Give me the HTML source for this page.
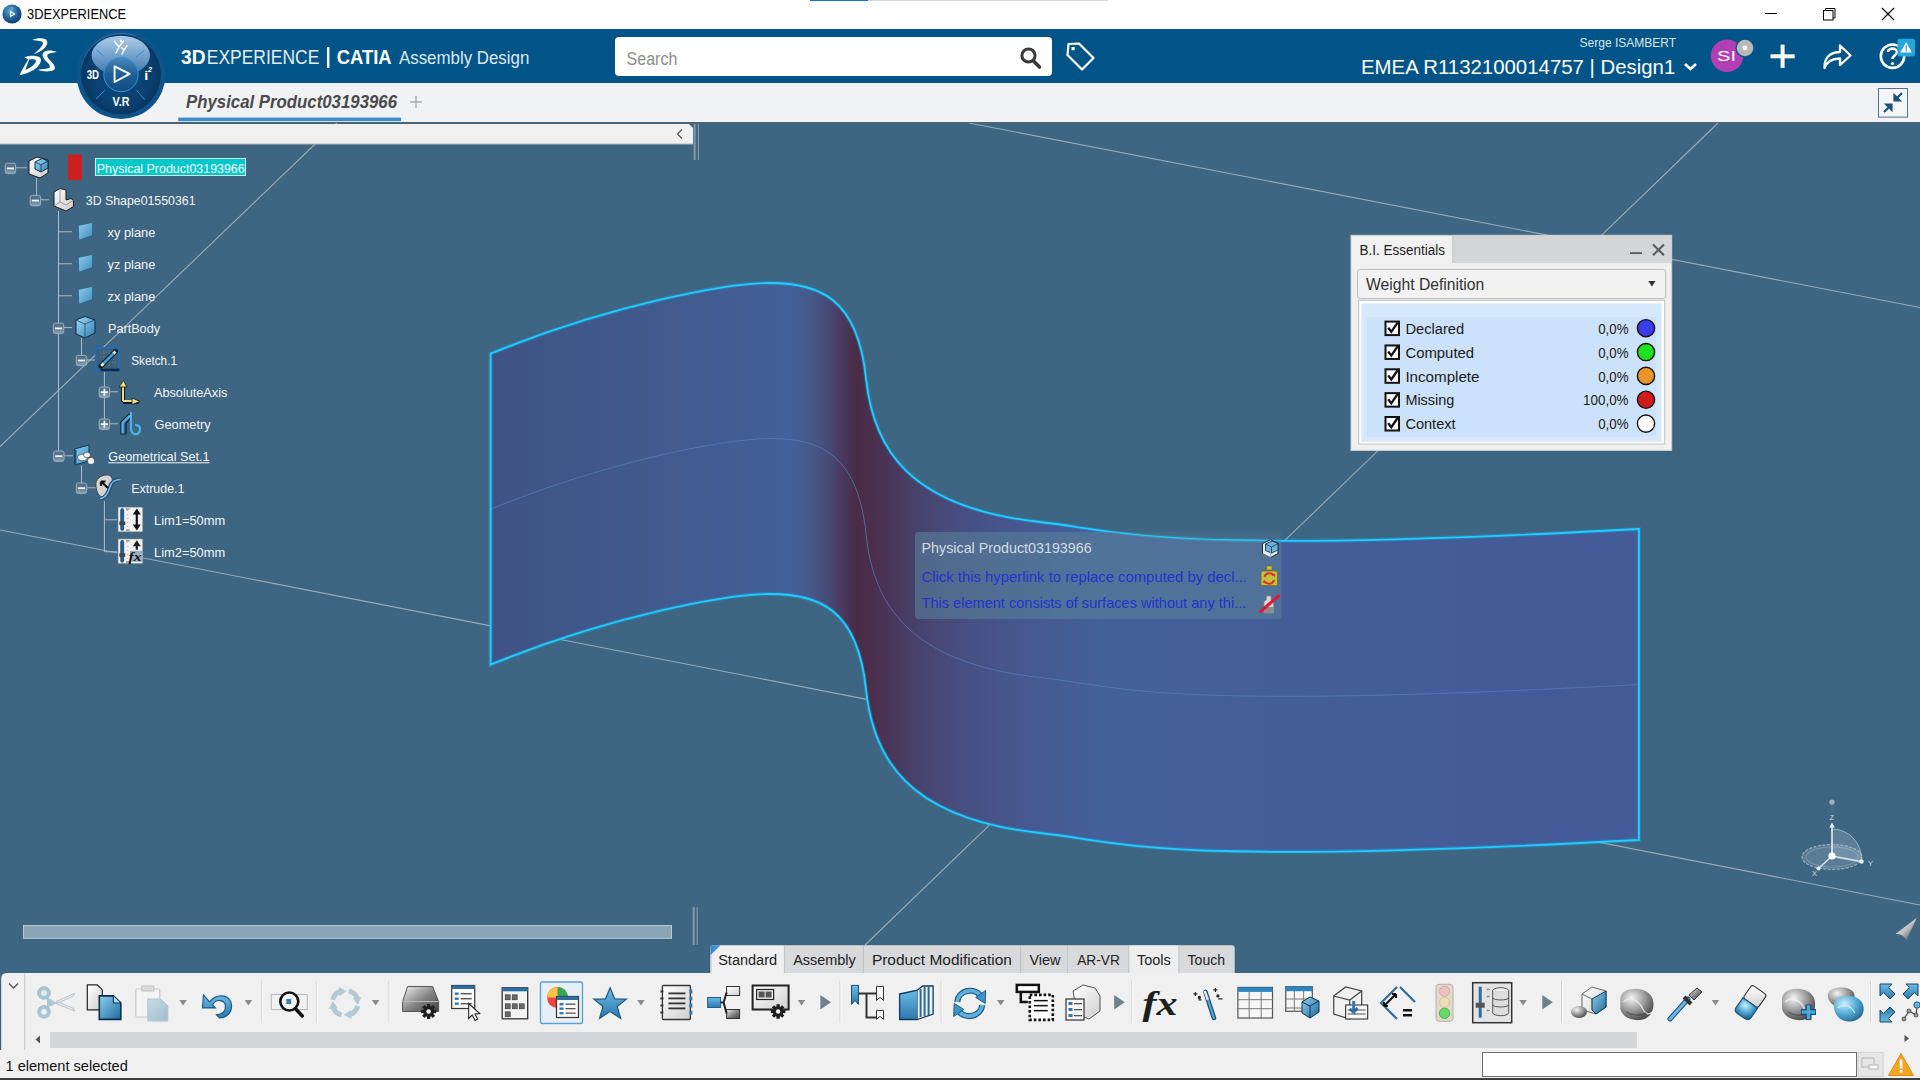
<!DOCTYPE html>
<html><head><meta charset="utf-8">
<style>
*{box-sizing:border-box;margin:0;padding:0}
html,body{width:1920px;height:1080px;overflow:hidden;background:#3e6581;font-family:"Liberation Sans",sans-serif}
.a{position:absolute}
#title{left:0;top:0;width:1920px;height:29px;background:#fff}
#hdr{left:0;top:29px;width:1920px;height:54px;background:#005487}
#tabbar{left:0;top:83px;width:1920px;height:40px;background:#f1f2f4;border-bottom:1px solid #56626c}
#toolbar{left:0;top:973px;width:1920px;height:77px;background:#f0f0f0;border-top-left-radius:6px}
#status{left:0;top:1050px;width:1920px;height:30px;background:#f0f0f0;border-bottom:2px solid #3c3c3c}
.tt{white-space:nowrap}
</style></head>
<body>
<svg class="a" style="left:0;top:0" width="1920" height="1080" viewBox="0 0 1920 1080">
<defs>
<linearGradient id="sg" gradientUnits="userSpaceOnUse" x1="490" y1="0" x2="1640" y2="0">
<stop offset="0" stop-color="#3f5383"/>
<stop offset="0.1313" stop-color="#405a8c"/>
<stop offset="0.2626" stop-color="#44609a"/>
<stop offset="0.2765" stop-color="#455a8c"/>
<stop offset="0.2939" stop-color="#474b78"/>
<stop offset="0.3061" stop-color="#4a3860"/>
<stop offset="0.3183" stop-color="#4a2c45"/>
<stop offset="0.3374" stop-color="#4a3050"/>
<stop offset="0.3652" stop-color="#483f68"/>
<stop offset="0.4043" stop-color="#474c7e"/>
<stop offset="0.4435" stop-color="#46558c"/>
<stop offset="0.5270" stop-color="#44609a"/>
<stop offset="1" stop-color="#435b98"/>
</linearGradient>
<clipPath id="shp"><path d="M490.6,353.7 C613.9,303.4 729.4,283.0 770.0,283.0 C817.6,283.0 857.5,296.6 866.0,378.3 C873.1,446.7 906.8,507.5 1040.0,522.0 C1124.2,531.1 1152.9,555.2 1639.0,529.0 L1639.0,840.0 C1152.9,866.2 1124.2,842.1 1040.0,833.0 C906.8,818.5 873.1,757.7 866.0,689.3 C857.5,607.6 817.6,594.0 770.0,594.0 C729.4,594.0 613.9,614.4 490.6,664.7 Z"/></clipPath>
<clipPath id="tipc"><rect x="915" y="532" width="366.3" height="87" rx="4"/></clipPath>
</defs>
<g stroke="#a7b8c4" stroke-width="1.1" fill="none" opacity="0.85">
<line x1="969" y1="123" x2="1920" y2="307.5"/>
<line x1="1718" y1="123" x2="865" y2="945"/>
<line x1="337" y1="123" x2="0" y2="446.6"/>
<line x1="0" y1="530" x2="1920" y2="905"/>
</g>
<g>
<ellipse cx="1832" cy="857" rx="30" ry="12.5" fill="rgba(190,210,225,0.22)" stroke="rgba(215,228,238,0.55)" stroke-width="1.2" stroke-dasharray="3 1.5"/>
<ellipse cx="1832" cy="857" rx="26" ry="10" fill="none" stroke="rgba(215,228,238,0.25)" stroke-width="1"/>
<path d="M1832,857 L1832,829 A29,29 0 0 1 1861,862 Z" fill="rgba(200,218,230,0.22)" stroke="rgba(215,228,238,0.5)" stroke-width="1"/>
<path d="M1832,856 L1832,826" stroke="#dfe8ef" stroke-width="1.6"/>
<path d="M1829.3,827.5 L1832,822.5 L1834.7,827.5 Z" fill="#eef3f7"/>
<path d="M1832,856 L1818.5,868.5 M1832,856 L1861.5,861.5" stroke="#d4dfe7" stroke-width="1.6"/>
<circle cx="1818.5" cy="868.5" r="2" fill="#e6edf2"/><circle cx="1861.5" cy="861.5" r="2.2" fill="#e6edf2"/>
<circle cx="1832" cy="856" r="3.6" fill="#ffffff"/>
<circle cx="1832" cy="802" r="2.6" fill="#9fb2c0"/>
<path d="M1832,805 L1832,812" stroke="rgba(160,180,195,0.5)" stroke-width="1" stroke-dasharray="1 1"/>
<g font-family="Liberation Sans" font-size="7.5" fill="#cfdbe4"><text x="1829.5" y="820">Z</text><text x="1812" y="876">X</text><text x="1868" y="866">Y</text></g>
</g>
<defs><linearGradient id="cone" x1="0" y1="0" x2="1" y2="1"><stop offset="0" stop-color="#ffffff"/><stop offset="0.55" stop-color="#b8b8b8"/><stop offset="1" stop-color="#2a2a2a"/></linearGradient></defs>
<path d="M1917,917.5 L1895.5,934 C1900,934 1904,935.5 1906.5,940 Z" fill="url(#cone)"/>
<path d="M490.6,353.7 C613.9,303.4 729.4,283.0 770.0,283.0 C817.6,283.0 857.5,296.6 866.0,378.3 C873.1,446.7 906.8,507.5 1040.0,522.0 C1124.2,531.1 1152.9,555.2 1639.0,529.0 L1639.0,840.0 C1152.9,866.2 1124.2,842.1 1040.0,833.0 C906.8,818.5 873.1,757.7 866.0,689.3 C857.5,607.6 817.6,594.0 770.0,594.0 C729.4,594.0 613.9,614.4 490.6,664.7 Z" fill="url(#sg)"/>
<path d="M490.6,509.2 C613.9,458.9 729.4,438.5 770.0,438.5 C817.6,438.5 857.5,452.1 866.0,533.8 C873.1,602.2 906.8,663.0 1040.0,677.5 C1124.2,686.6 1152.9,710.7 1639.0,684.5" fill="none" stroke="#5682c2" stroke-width="1" opacity="0.7"/>
<path d="M490.6,353.7 C613.9,303.4 729.4,283.0 770.0,283.0 C817.6,283.0 857.5,296.6 866.0,378.3 C873.1,446.7 906.8,507.5 1040.0,522.0 C1124.2,531.1 1152.9,555.2 1639.0,529.0 L1639.0,840.0 C1152.9,866.2 1124.2,842.1 1040.0,833.0 C906.8,818.5 873.1,757.7 866.0,689.3 C857.5,607.6 817.6,594.0 770.0,594.0 C729.4,594.0 613.9,614.4 490.6,664.7 Z" fill="none" stroke="#1aa8e8" stroke-width="4" opacity="0.35"/>
<path d="M490.6,353.7 C613.9,303.4 729.4,283.0 770.0,283.0 C817.6,283.0 857.5,296.6 866.0,378.3 C873.1,446.7 906.8,507.5 1040.0,522.0 C1124.2,531.1 1152.9,555.2 1639.0,529.0 L1639.0,840.0 C1152.9,866.2 1124.2,842.1 1040.0,833.0 C906.8,818.5 873.1,757.7 866.0,689.3 C857.5,607.6 817.6,594.0 770.0,594.0 C729.4,594.0 613.9,614.4 490.6,664.7 Z" fill="none" stroke="#22ccff" stroke-width="1.8"/>
<g clip-path="url(#tipc)"><rect x="900" y="520" width="400" height="110" fill="rgba(255,255,255,0.045)"/><rect x="900" y="520" width="400" height="110" fill="rgb(83,123,152)" opacity="0.6" clip-path="url(#shp)"/></g>
</svg>
<div id="title" class="a">
<svg class="a" style="left:2px;top:4px" width="20" height="20" viewBox="0 0 20 20">
<defs><radialGradient id="ig" cx="0.4" cy="0.35" r="0.7"><stop offset="0" stop-color="#5fa8d8"/><stop offset="0.6" stop-color="#1d5d95"/><stop offset="1" stop-color="#0b3766"/></radialGradient></defs>
<circle cx="10" cy="10" r="9.6" fill="url(#ig)"/>
<path d="M8.5,7.5 L12.5,10 L8.5,12.5 Z" fill="none" stroke="#fff" stroke-width="1.1"/>
<text x="10" y="5.5" font-size="4" fill="#cde" text-anchor="middle" font-family="Liberation Sans">Y</text>
</svg>
<div class="a tt" style="left:27px;top:5px;font-size:15px;line-height:18px;color:#000;transform:scaleX(0.855);transform-origin:0 0">3DEXPERIENCE</div>
<div class="a" style="left:810px;top:0;width:58px;height:1px;background:#1a73c7"></div>
<div class="a" style="left:868px;top:0;width:240px;height:1px;background:#d6d6d6"></div>
<div class="a" style="left:1765px;top:13px;width:12px;height:1px;background:#000"></div>
<svg class="a" style="left:1822px;top:7px" width="14" height="14" viewBox="0 0 14 14"><rect x="1.5" y="3.5" width="9.5" height="9.5" fill="#fff" stroke="#000" stroke-width="1"/><path d="M3.5,3.5 V1.5 H13 V11 H11" fill="none" stroke="#000" stroke-width="1"/></svg>
<svg class="a" style="left:1881px;top:7px" width="14" height="14" viewBox="0 0 14 14"><path d="M1,1 L13,13 M13,1 L1,13" stroke="#000" stroke-width="1.1"/></svg>
</div>
<div id="hdr" class="a">
<svg class="a" style="left:14px;top:5px" width="48" height="46" viewBox="0 0 48 46">
<g fill="#fff">
<path d="M18.3,6 C22,4.3 28,3.6 31.5,5.2 C34.5,6.8 33.8,11 30,14.5 C27,17.3 23,19 19.8,20.2 C23,17.3 26.3,14.2 28.3,11.2 C29.8,8.8 28.6,7.1 25.6,6.9 C23,6.7 20.5,6.6 18.3,6 Z"/>
<path fill-rule="evenodd" d="M10.2,23.6 C14,21.3 22,21.2 25.6,23.3 C28.3,25.3 27,30 22.3,34 C18.3,37.5 11,40.3 5.5,41 C8,36 11.5,30 14.3,25.6 C13,24.6 11.5,24 10.2,23.6 Z M15.2,25.4 C18.2,24.9 21.3,25 21.9,26.6 C22.3,28.6 19.6,31.6 16.1,33.6 C14.1,34.8 12.6,35.5 11.4,36 C12.6,32.5 13.9,29 15.2,25.4 Z"/>
<path d="M43,18.3 C39,15.8 32,15.8 29.4,18.4 C27.3,21 29.4,24.6 33,28.1 C35.4,30.5 36.8,32.5 35.4,33.7 C33,35 28,35 23.8,35.8 C28,37.6 36,38.1 39.6,36.3 C42.2,34.5 40.6,31 37.6,28 C34.6,25 32.5,22.6 33.5,20.8 C35,19 39,18.6 43,18.3 Z"/>
</g></svg>
<svg class="a" style="left:76px;top:0px;z-index:5" width="90" height="92" viewBox="0 29 90 92">
<defs>
<radialGradient id="cg1" cx="0.5" cy="0.5" r="0.5"><stop offset="0" stop-color="#0d4a80"/><stop offset="0.75" stop-color="#0a4070"/><stop offset="1" stop-color="#083762"/></radialGradient>
<linearGradient id="cg2" x1="0" y1="0" x2="0" y2="1"><stop offset="0" stop-color="#aecbe6"/><stop offset="0.45" stop-color="#7aa7d1"/><stop offset="1" stop-color="#3d74a8"/></linearGradient>
<linearGradient id="cg3" x1="0" y1="0" x2="0" y2="1"><stop offset="0" stop-color="#4a86bb"/><stop offset="0.5" stop-color="#1f5f97"/><stop offset="1" stop-color="#104b80"/></linearGradient>
</defs>
<g transform="translate(0,29)">
<circle cx="45" cy="45.5" r="44.5" fill="#0e548b"/><path d="M6,38 A40,40 0 0 1 60,7" fill="none" stroke="#2c73ab" stroke-width="1"/>
<circle cx="45" cy="45.5" r="40" fill="url(#cg1)"/>
<ellipse cx="44.8" cy="26.5" rx="29.2" ry="19.8" fill="url(#cg2)"/>
<circle cx="45" cy="45.5" r="17.2" fill="url(#cg3)" stroke="#3394e0" stroke-width="1"/>
<path d="M38.6,37.4 L53.6,44.9 L38.6,53 Z" fill="none" stroke="#fff" stroke-width="1.9" stroke-linejoin="round"/>
<g stroke="#3f8dd0" stroke-width="1">
<line x1="20.6" y1="20.8" x2="28.5" y2="27.9"/><line x1="59.9" y1="27.9" x2="68.4" y2="21.3"/>
<line x1="20.1" y1="70" x2="29" y2="61.2"/><line x1="60.4" y1="61.2" x2="68.8" y2="70.6"/>
</g>
<g fill="#fff" font-family="Liberation Sans" font-weight="bold">
<text x="10.7" y="50.2" font-size="12.5" textLength="12.3" lengthAdjust="spacingAndGlyphs">3D</text>
<text x="68.2" y="50.6" font-size="13" textLength="4" lengthAdjust="spacingAndGlyphs">i</text>
<text x="72" y="43" font-size="7" font-style="italic">2</text>
<text x="36.5" y="76.6" font-size="12.5" textLength="17" lengthAdjust="spacingAndGlyphs">V.R</text>
</g>
<g stroke="#fff" stroke-width="1.5" fill="none" stroke-linecap="round">
<path d="M38.5,12.5 L43,18 L40,24 M43,18 L47.5,12"/>
<path d="M45.5,18.5 L48,21 L46,25 M48,21 L51,16.5"/>
</g>
<circle cx="45" cy="11.8" r="1.2" fill="#fff"/>
</g>
</svg>


</div>

<div id="tabbar" class="a"></div>
<svg class="a" style="left:0px;top:0px" width="1920" height="123" viewBox="0 0 1920 123" font-family="Liberation Sans"><text x="181" y="64" font-size="19.5" fill="#fff" font-weight="bold" font-style="normal" text-anchor="start" textLength="24.5" lengthAdjust="spacingAndGlyphs" >3D</text><text x="206.8" y="64" font-size="19.5" fill="#e4edf4" font-weight="normal" font-style="normal" text-anchor="start" textLength="112.5" lengthAdjust="spacingAndGlyphs" >EXPERIENCE</text><rect x="327" y="47" width="2.4" height="21" fill="#fff"/><text x="336.7" y="64" font-size="19.5" fill="#fff" font-weight="bold" font-style="normal" text-anchor="start" textLength="55" lengthAdjust="spacingAndGlyphs" >CATIA</text><text x="399" y="64" font-size="18.5" fill="#dfe9f1" font-weight="normal" font-style="normal" text-anchor="start" textLength="130.3" lengthAdjust="spacingAndGlyphs" >Assembly Design</text><rect x="615" y="37" width="437" height="39" rx="4" fill="#fff"/><text x="626.6" y="64.5" font-size="17.5" fill="#8c8c8c" font-weight="normal" font-style="normal" text-anchor="start" textLength="50.7" lengthAdjust="spacingAndGlyphs" >Search</text><circle cx="1028.5" cy="55.5" r="6.6" fill="none" stroke="#3a3a3a" stroke-width="3"/><line x1="1033.5" y1="61" x2="1039.5" y2="67" stroke="#3a3a3a" stroke-width="3.6" stroke-linecap="round"/><path d="M1068.5,44 L1079,43.5 L1093.5,58 L1082,69.5 L1067.5,55 Z" fill="none" stroke="#fff" stroke-width="2.2" stroke-linejoin="round"/><rect x="1071.5" y="47" width="3.2" height="3.2" fill="#fff"/><text x="1579.6" y="46.7" font-size="12" fill="#d9e6f0" font-weight="normal" font-style="normal" text-anchor="start" textLength="96.4" lengthAdjust="spacingAndGlyphs" >Serge ISAMBERT</text><text x="1361" y="73.9" font-size="19.5" fill="#fff" font-weight="normal" font-style="normal" text-anchor="start" textLength="314.3" lengthAdjust="spacingAndGlyphs" >EMEA R1132100014757 | Design1</text><path d="M1685,64 L1690.5,69 L1696,64" fill="none" stroke="#fff" stroke-width="2.6"/><circle cx="1727" cy="55.7" r="16.2" fill="#b23fb4"/><text x="1717" y="61" font-size="15" fill="#fff" font-weight="normal" font-style="normal" text-anchor="start" textLength="19" lengthAdjust="spacingAndGlyphs" >SI</text><circle cx="1745" cy="48" r="9.6" fill="#005487"/><circle cx="1745" cy="48" r="8.3" fill="#b9b9b9"/><circle cx="1745" cy="47.8" r="2.4" fill="#fff"/><rect x="1770.5" y="54.3" width="24.2" height="4" fill="#fff"/><rect x="1780.6" y="44.6" width="4" height="23.3" fill="#fff"/><path d="M1824.5,68 C1824,58 1830,52 1840,52 L1840,45.5 L1850.5,55.5 L1840,65 L1840,58.5 C1832,58.5 1827,61 1824.5,68 Z" fill="none" stroke="#fff" stroke-width="2.3" stroke-linejoin="round"/><circle cx="1892.5" cy="56.2" r="11.7" fill="none" stroke="#fff" stroke-width="2.6"/><path d="M1888,52 C1888,47.5 1897,47.5 1897,52 C1897,55 1892.5,55.5 1892.5,59" fill="none" stroke="#fff" stroke-width="2.6"/><circle cx="1892.5" cy="63.5" r="1.6" fill="#fff"/><rect x="1897.5" y="38.8" width="17.5" height="17.6" rx="2.2" fill="#25a5d9"/><path d="M1906.2,42.3 L1912,52.5 L1900.4,52.5 Z" fill="#fff"/><rect x="1905.6" y="45.3" width="1.3" height="4.3" fill="#25a5d9"/><rect x="1905.6" y="50.2" width="1.3" height="1.3" fill="#25a5d9"/><text x="186" y="108.3" font-size="18" fill="#4a4a4a" font-weight="bold" font-style="italic" text-anchor="start" textLength="211" lengthAdjust="spacingAndGlyphs" >Physical Product03193966</text><rect x="410" y="101.3" width="12" height="1.4" fill="#a8a8a8"/><rect x="415.3" y="96" width="1.4" height="12" fill="#a8a8a8"/><rect x="178.3" y="117.6" width="222.7" height="3.6" fill="#3c8ccb"/><rect x="1878.5" y="88.5" width="29" height="28.6" fill="#f4f5f7" stroke="#4f7090" stroke-width="1"/><path d="M1884,112 L1891,105 M1886.5,104.5 L1891.5,104.5 L1891.5,109.5 Z M1902,93 L1895,100 M1894.5,95.5 L1894.5,100.5 L1899.5,100.5 Z" stroke="#1d4f7c" stroke-width="2.2" fill="#1d4f7c"/></svg>
<svg class="a" style="left:0px;top:0px" width="720" height="973" viewBox="0 0 720 973" font-family="Liberation Sans"><defs>
<linearGradient id="bxg" x1="0" y1="0" x2="0" y2="1"><stop offset="0" stop-color="#4a6e89"/><stop offset="0.5" stop-color="#557a94"/><stop offset="1" stop-color="#8da4b4"/></linearGradient>
<linearGradient id="plg" x1="0" y1="0" x2="1" y2="1"><stop offset="0" stop-color="#8fcbec"/><stop offset="1" stop-color="#3f8fc0"/></linearGradient>
<linearGradient id="cub" x1="0" y1="0" x2="1" y2="1"><stop offset="0" stop-color="#a8dcf5"/><stop offset="1" stop-color="#2f7fb5"/></linearGradient>
<linearGradient id="wht" x1="0" y1="0" x2="1" y2="1"><stop offset="0" stop-color="#ffffff"/><stop offset="1" stop-color="#c9c9c9"/></linearGradient>
</defs><rect x="15.7" y="167.3" width="11.3" height="1" fill="#aebdc9"/><rect x="36.1" y="178" width="1" height="17.400000000000006" fill="#aebdc9"/><rect x="40.7" y="199.3" width="8.299999999999997" height="1" fill="#aebdc9"/><rect x="58.0" y="211" width="1" height="112" fill="#aebdc9"/><rect x="58.0" y="334" width="1" height="117" fill="#aebdc9"/><rect x="58.5" y="231.3" width="13.5" height="1" fill="#aebdc9"/><rect x="58.5" y="263.3" width="13.5" height="1" fill="#aebdc9"/><rect x="58.5" y="295.3" width="13.5" height="1" fill="#aebdc9"/><rect x="63.9" y="327.1" width="8.100000000000001" height="1" fill="#aebdc9"/><rect x="81.0" y="338" width="1" height="17.399999999999977" fill="#aebdc9"/><rect x="86.9" y="359.5" width="8.099999999999994" height="1" fill="#aebdc9"/><rect x="103.9" y="371.5" width="1" height="15.399999999999977" fill="#aebdc9"/><rect x="103.9" y="397.5" width="1" height="21.5" fill="#aebdc9"/><rect x="109.7" y="391.3" width="8.299999999999997" height="1" fill="#aebdc9"/><rect x="109.7" y="423.3" width="8.299999999999997" height="1" fill="#aebdc9"/><rect x="64" y="455.3" width="9" height="1" fill="#aebdc9"/><rect x="81.0" y="465.5" width="1" height="17.5" fill="#aebdc9"/><rect x="86.9" y="487.3" width="9.099999999999994" height="1" fill="#aebdc9"/><rect x="103.9" y="501" width="1" height="51" fill="#aebdc9"/><rect x="104.4" y="519.3" width="12.599999999999994" height="1" fill="#aebdc9"/><rect x="104.4" y="551.3" width="12.599999999999994" height="1" fill="#aebdc9"/><rect x="5.2" y="163.20000000000002" width="10.4" height="10.4" rx="2" fill="url(#bxg)" stroke="#9fb0bd" stroke-width="1"/><rect x="6.800000000000001" y="167.5" width="7.2" height="1.8" fill="#f2f5f7"/><rect x="30.2" y="195.4" width="10.4" height="10.4" rx="2" fill="url(#bxg)" stroke="#9fb0bd" stroke-width="1"/><rect x="31.799999999999997" y="199.7" width="7.2" height="1.8" fill="#f2f5f7"/><rect x="53.3" y="323.2" width="10.4" height="10.4" rx="2" fill="url(#bxg)" stroke="#9fb0bd" stroke-width="1"/><rect x="54.9" y="327.5" width="7.2" height="1.8" fill="#f2f5f7"/><rect x="76.3" y="355.3" width="10.4" height="10.4" rx="2" fill="url(#bxg)" stroke="#9fb0bd" stroke-width="1"/><rect x="77.9" y="359.6" width="7.2" height="1.8" fill="#f2f5f7"/><rect x="99.2" y="387.0" width="10.4" height="10.4" rx="2" fill="url(#bxg)" stroke="#9fb0bd" stroke-width="1"/><rect x="100.80000000000001" y="391.3" width="7.2" height="1.8" fill="#f2f5f7"/><rect x="103.5" y="388.59999999999997" width="1.8" height="7.2" fill="#f2f5f7"/><rect x="99.2" y="419.0" width="10.4" height="10.4" rx="2" fill="url(#bxg)" stroke="#9fb0bd" stroke-width="1"/><rect x="100.80000000000001" y="423.3" width="7.2" height="1.8" fill="#f2f5f7"/><rect x="103.5" y="420.59999999999997" width="1.8" height="7.2" fill="#f2f5f7"/><rect x="53.599999999999994" y="451.0" width="10.4" height="10.4" rx="2" fill="url(#bxg)" stroke="#9fb0bd" stroke-width="1"/><rect x="55.199999999999996" y="455.3" width="7.2" height="1.8" fill="#f2f5f7"/><rect x="76.3" y="483.0" width="10.4" height="10.4" rx="2" fill="url(#bxg)" stroke="#9fb0bd" stroke-width="1"/><rect x="77.9" y="487.3" width="7.2" height="1.8" fill="#f2f5f7"/><path d="M29,161 L37,157 L48,160 L48,173 L40,178 L29,174 Z" fill="url(#wht)" stroke="#1b1b1b" stroke-width="1"/><path d="M35,162 L42,158.5 L48,161 L48,168 L41,172 L35,169 Z" fill="url(#cub)" stroke="#0d3550" stroke-width="1"/><path d="M35,162 L41,165 L48,161 M41,165 L41,172" fill="none" stroke="#0d3550" stroke-width="0.8"/><rect x="68" y="154.6" width="14" height="25.5" fill="#cd1f1e"/><path d="M54,192 L60,188.5 L66,190 L66,200 L71,198.5 L73.5,200.5 L73.5,206.5 L66,211 L54,206 Z" fill="url(#wht)" stroke="#1d1d1d" stroke-width="1"/><path d="M60,188.5 L60,202 L66,205 L73.5,200.5 M60,202 L54,206" fill="none" stroke="#888" stroke-width="0.8"/><path d="M78.2,225.5 L92.6,222.2 L92.6,235.6 L78.7,240.3 Z" fill="url(#plg)" stroke="#2a5f82" stroke-width="0.8"/><path d="M78.2,257.5 L92.6,254.2 L92.6,267.6 L78.7,272.3 Z" fill="url(#plg)" stroke="#2a5f82" stroke-width="0.8"/><path d="M78.2,289.5 L92.6,286.2 L92.6,299.6 L78.7,304.3 Z" fill="url(#plg)" stroke="#2a5f82" stroke-width="0.8"/><path d="M76,320 L85,316.5 L95,320 L95,333 L85,338 L76,334 Z" fill="url(#cub)" stroke="#0b2d45" stroke-width="1"/><path d="M76,320 L85,324 L95,320 M85,324 L85,338" fill="none" stroke="#1f5a80" stroke-width="0.9"/><rect x="95.8" y="347.8" width="23" height="23" fill="#3f5f78" stroke="#1f6ec0" stroke-width="1.8"/><g stroke="#6f8ea4" stroke-width="0.7" stroke-dasharray="1 2"><path d="M100,352 H117 M100,357 H117 M100,362 H117 M104,350 V369 M109,350 V369 M114,350 V369"/></g><rect x="100.5" y="368.6" width="19" height="2.6" fill="#0a2a4a"/><path d="M101,366 L115.5,351.5" stroke="#0d1a26" stroke-width="5.2" stroke-linecap="round"/><path d="M102.5,364.5 L114,353" stroke="#3aa0dc" stroke-width="2.8"/><path d="M101.2,365.8 L103.5,363.5" stroke="#fff" stroke-width="2.6"/><path d="M113.5,353.5 L115.5,351.5" stroke="#f4f4f4" stroke-width="2.8"/><path d="M123,402 L123,386 M123,402 L139,402" fill="none" stroke="#0c1a3a" stroke-width="4"/><path d="M123,401 L123,386 M123,401 L138,401" fill="none" stroke="#f3dc7a" stroke-width="2"/><path d="M119,387 L123.5,380.5 L127,387 Z M132,398 L140,401.5 L132,404.5 Z" fill="#f3dc7a" stroke="#0c1a3a" stroke-width="0.8"/><path d="M121,434 L121,422 L129,414 L132,417 L126,423 L126,434 Z" fill="none" stroke="#0c1a3a" stroke-width="1.2"/><path d="M122.5,433.5 L122.5,423 L130,415.5 M131,412 L131,428 C131,436 140,436 140,429 C140,425 136,425 135,425" fill="none" stroke="#4ab4ec" stroke-width="2.2"/><path d="M74.5,449 L89,445 L89,461 L74.5,465 Z" fill="url(#plg)" stroke="#0f3a5c" stroke-width="1"/><path d="M74.5,449 L74.5,465 L76.5,466 L76.5,450 Z" fill="#1a5588"/><ellipse cx="82.5" cy="457.5" rx="5" ry="3.2" fill="#f2f2f2" stroke="#333" stroke-width="0.6"/><ellipse cx="87" cy="455" rx="3.4" ry="2.8" fill="#f7f7f7" stroke="#333" stroke-width="0.6"/><circle cx="91" cy="461" r="3.6" fill="#f2f2f2" stroke="#333" stroke-width="0.6"/><path d="M96,486 C95,479 101,475 107,475 C111,475 113,478 112,483 C111,489 108,494 103,497 C99,497 96.5,492 96,486 Z" fill="#d4d4d4" stroke="#3a3a3a" stroke-width="0.8"/><path d="M100,498.5 C106,498 108,493 110,487 C111.5,482 114,479.5 120.5,479.5" fill="none" stroke="#1f4f78" stroke-width="4"/><path d="M100,498.5 C106,498 108,493 110,487 C111.5,482 114,479.5 120.5,479.5" fill="none" stroke="#7fbbe0" stroke-width="1.6"/><path d="M101,481.5 L108,488 M101,481.5 L101,486 M101,481.5 L105.5,481.5" stroke="#111" stroke-width="2.2"/><rect x="117.9" y="507" width="25" height="25" fill="#f2f2f2" stroke="#5e6a72" stroke-width="0.8"/><rect x="120.6" y="508.5" width="3.2" height="22" rx="1.6" fill="#1f5f96" stroke="#0d2f4f" stroke-width="0.5"/><rect x="119.3" y="521.5" width="6" height="3.5" fill="#444"/><path d="M127.7,510 V530" stroke="#aaa" stroke-width="1" stroke-dasharray="1 3"/><rect x="126" y="508.5" width="3.5" height="1.2" fill="#777"/><rect x="126" y="529.5" width="3.5" height="1.2" fill="#777"/><path d="M136.8,512 L136.8,527" stroke="#111" stroke-width="2.2"/><path d="M132.8,514.5 L136.8,508.5 L140.8,514.5 Z M132.8,524.5 L136.8,530.5 L140.8,524.5 Z" fill="#111"/><rect x="117.9" y="538.8" width="25" height="25" fill="#f2f2f2" stroke="#5e6a72" stroke-width="0.8"/><rect x="120.6" y="540.3" width="3.2" height="22" rx="1.6" fill="#1f5f96" stroke="#0d2f4f" stroke-width="0.5"/><rect x="119.3" y="553.3" width="6" height="3.5" fill="#444"/><path d="M127.7,541.8 V561.8" stroke="#aaa" stroke-width="1" stroke-dasharray="1 3"/><rect x="126" y="540.3" width="3.5" height="1.2" fill="#777"/><rect x="126" y="561.3" width="3.5" height="1.2" fill="#777"/><path d="M136.8,543.8 L136.8,549.8" stroke="#222" stroke-width="2.2"/><path d="M132.8,546.3 L136.8,540.3 L140.8,546.3 Z" fill="#222"/><rect x="130" y="550.8" width="12" height="11" fill="#3d6d94" opacity="0.5"/><text x="128.5" y="561.3" font-size="13" fill="#111" font-weight="bold" font-style="italic" text-anchor="start" textLength="13" lengthAdjust="spacingAndGlyphs" font-family="Liberation Serif">fx</text><rect x="95.5" y="158.5" width="150" height="17" fill="#00c7cb" stroke="#c9fbfb" stroke-width="1"/><text x="96.8" y="172.6" font-size="12.3" fill="#fff" font-weight="normal" font-style="normal" text-anchor="start" textLength="147.9" lengthAdjust="spacingAndGlyphs" >Physical Product03193966</text><text x="85.8" y="204.9" font-size="12.3" fill="#f3f6f8" font-weight="normal" font-style="normal" text-anchor="start" textLength="109.7" lengthAdjust="spacingAndGlyphs" >3D Shape01550361</text><text x="107.6" y="236.9" font-size="12.3" fill="#f3f6f8" font-weight="normal" font-style="normal" text-anchor="start" textLength="47.7" lengthAdjust="spacingAndGlyphs" >xy plane</text><text x="107.6" y="268.9" font-size="12.3" fill="#f3f6f8" font-weight="normal" font-style="normal" text-anchor="start" textLength="47.7" lengthAdjust="spacingAndGlyphs" >yz plane</text><text x="107.6" y="300.9" font-size="12.3" fill="#f3f6f8" font-weight="normal" font-style="normal" text-anchor="start" textLength="47.7" lengthAdjust="spacingAndGlyphs" >zx plane</text><text x="108" y="332.9" font-size="12.3" fill="#f3f6f8" font-weight="normal" font-style="normal" text-anchor="start" textLength="52" lengthAdjust="spacingAndGlyphs" >PartBody</text><text x="131.2" y="364.8" font-size="12.3" fill="#f3f6f8" font-weight="normal" font-style="normal" text-anchor="start" textLength="45.8" lengthAdjust="spacingAndGlyphs" >Sketch.1</text><text x="154" y="396.8" font-size="12.3" fill="#f3f6f8" font-weight="normal" font-style="normal" text-anchor="start" textLength="73.3" lengthAdjust="spacingAndGlyphs" >AbsoluteAxis</text><text x="154.6" y="428.8" font-size="12.3" fill="#f3f6f8" font-weight="normal" font-style="normal" text-anchor="start" textLength="56" lengthAdjust="spacingAndGlyphs" >Geometry</text><text x="108.3" y="460.8" font-size="12.3" fill="#f3f6f8" font-weight="normal" font-style="normal" text-anchor="start" textLength="101.2" lengthAdjust="spacingAndGlyphs" >Geometrical Set.1</text><text x="131.2" y="492.8" font-size="12.3" fill="#f3f6f8" font-weight="normal" font-style="normal" text-anchor="start" textLength="53.3" lengthAdjust="spacingAndGlyphs" >Extrude.1</text><text x="154" y="524.8" font-size="12.3" fill="#f3f6f8" font-weight="normal" font-style="normal" text-anchor="start" textLength="71.2" lengthAdjust="spacingAndGlyphs" >Lim1=50mm</text><text x="154" y="556.8" font-size="12.3" fill="#f3f6f8" font-weight="normal" font-style="normal" text-anchor="start" textLength="71.2" lengthAdjust="spacingAndGlyphs" >Lim2=50mm</text><rect x="108.3" y="462.3" width="101.2" height="1" fill="#f3f6f8"/><path d="M0,124 L689,124 L693,128 L693,144 L0,144 Z" fill="#f0f0f0"/><rect x="0" y="143.5" width="693" height="1" fill="#b3b8bc"/><path d="M682,129.5 L677.5,134 L682,138.5" fill="none" stroke="#5a5a5a" stroke-width="1.3"/><rect x="693.6" y="124" width="2" height="36" fill="#8698a6"/><rect x="697.8" y="124" width="1.2" height="36" fill="#8698a6"/><rect x="692.7" y="907" width="2" height="38" fill="#8698a6"/><rect x="696.5" y="907" width="1.2" height="38" fill="#8698a6"/><rect x="23.5" y="925.5" width="648" height="12.8" fill="#8ba4b6" stroke="#b9c9d4" stroke-width="1"/></svg>
<svg class="a" style="left:1340px;top:225px" width="340" height="235" viewBox="1340 225 340 235" font-family="Liberation Sans"><rect x="1351" y="235.3" width="320.7" height="215.1" fill="#f0f0f0" stroke="#d0d0d0" stroke-width="1"/><rect x="1452.8" y="236" width="218.4" height="27" fill="#d3d5d7"/><rect x="1452.3" y="236" width="1" height="27" fill="#c4c6c8"/><text x="1359.6" y="255.1" font-size="15.5" fill="#1e1e1e" font-weight="normal" font-style="normal" text-anchor="start" textLength="85.4" lengthAdjust="spacingAndGlyphs" >B.I. Essentials</text><rect x="1630" y="252.2" width="12" height="1.8" fill="#5a5a5a"/><path d="M1653,244.5 L1664,255.3 M1664,244.5 L1653,255.3" stroke="#5a5a5a" stroke-width="2"/><rect x="1357.5" y="269.4" width="308.2" height="29.2" rx="3" fill="#f2f2f2" stroke="#bcbcbc" stroke-width="1"/><text x="1366" y="290" font-size="15.8" fill="#333" font-weight="normal" font-style="normal" text-anchor="start" textLength="118.3" lengthAdjust="spacingAndGlyphs" >Weight Definition</text><path d="M1648.3,281 L1655.5,281 L1651.9,286.6 Z" fill="#333"/><rect x="1358.7" y="300.3" width="306" height="143.7" fill="#fff" stroke="#c2c2c2" stroke-width="1"/><rect x="1361.3" y="303.5" width="300.2" height="138.3" fill="#d6e8fb"/><rect x="1366.6" y="317.3" width="289.6" height="119.2" fill="#cbe2fa"/><rect x="1385.5" y="321.59999999999997" width="13.5" height="13.5" fill="#fff" stroke="#111" stroke-width="2"/><path d="M1388.2,327.7 L1391.3,331.8 L1397.6,322.59999999999997" fill="none" stroke="#111" stroke-width="2.3"/><text x="1405.4" y="333.9" font-size="15.5" fill="#1a1a1a" font-weight="normal" font-style="normal" text-anchor="start" textLength="58.7" lengthAdjust="spacingAndGlyphs" >Declared</text><text x="1598.2" y="333.9" font-size="15.5" fill="#1a1a1a" font-weight="normal" font-style="normal" text-anchor="start" textLength="30.3" lengthAdjust="spacingAndGlyphs" >0,0%</text><circle cx="1646" cy="328.2" r="8.6" fill="#3b3beb" stroke="#111" stroke-width="1.4"/><rect x="1385.5" y="345.45" width="13.5" height="13.5" fill="#fff" stroke="#111" stroke-width="2"/><path d="M1388.2,351.55 L1391.3,355.65000000000003 L1397.6,346.45" fill="none" stroke="#111" stroke-width="2.3"/><text x="1405.4" y="357.75" font-size="15.5" fill="#1a1a1a" font-weight="normal" font-style="normal" text-anchor="start" textLength="68.7" lengthAdjust="spacingAndGlyphs" >Computed</text><text x="1598.2" y="357.75" font-size="15.5" fill="#1a1a1a" font-weight="normal" font-style="normal" text-anchor="start" textLength="30.3" lengthAdjust="spacingAndGlyphs" >0,0%</text><circle cx="1646" cy="352.05" r="8.6" fill="#1ee21e" stroke="#111" stroke-width="1.4"/><rect x="1385.5" y="369.29999999999995" width="13.5" height="13.5" fill="#fff" stroke="#111" stroke-width="2"/><path d="M1388.2,375.4 L1391.3,379.5 L1397.6,370.29999999999995" fill="none" stroke="#111" stroke-width="2.3"/><text x="1405.4" y="381.59999999999997" font-size="15.5" fill="#1a1a1a" font-weight="normal" font-style="normal" text-anchor="start" textLength="74.1" lengthAdjust="spacingAndGlyphs" >Incomplete</text><text x="1598.2" y="381.59999999999997" font-size="15.5" fill="#1a1a1a" font-weight="normal" font-style="normal" text-anchor="start" textLength="30.3" lengthAdjust="spacingAndGlyphs" >0,0%</text><circle cx="1646" cy="375.9" r="8.6" fill="#e8962a" stroke="#111" stroke-width="1.4"/><rect x="1385.5" y="393.15" width="13.5" height="13.5" fill="#fff" stroke="#111" stroke-width="2"/><path d="M1388.2,399.25 L1391.3,403.35 L1397.6,394.15" fill="none" stroke="#111" stroke-width="2.3"/><text x="1405.4" y="405.45" font-size="15.5" fill="#1a1a1a" font-weight="normal" font-style="normal" text-anchor="start" textLength="48.9" lengthAdjust="spacingAndGlyphs" >Missing</text><text x="1583.1" y="405.45" font-size="15.5" fill="#1a1a1a" font-weight="normal" font-style="normal" text-anchor="start" textLength="45.4" lengthAdjust="spacingAndGlyphs" >100,0%</text><circle cx="1646" cy="399.75" r="8.6" fill="#d21c1c" stroke="#111" stroke-width="1.4"/><rect x="1385.5" y="417.0" width="13.5" height="13.5" fill="#fff" stroke="#111" stroke-width="2"/><path d="M1388.2,423.1 L1391.3,427.20000000000005 L1397.6,418.0" fill="none" stroke="#111" stroke-width="2.3"/><text x="1405.4" y="429.3" font-size="15.5" fill="#1a1a1a" font-weight="normal" font-style="normal" text-anchor="start" textLength="50.2" lengthAdjust="spacingAndGlyphs" >Context</text><text x="1598.2" y="429.3" font-size="15.5" fill="#1a1a1a" font-weight="normal" font-style="normal" text-anchor="start" textLength="30.3" lengthAdjust="spacingAndGlyphs" >0,0%</text><circle cx="1646" cy="423.6" r="8.6" fill="#ffffff" stroke="#111" stroke-width="1.4"/></svg>
<svg class="a" style="left:900px;top:520px" width="400" height="110" viewBox="900 520 400 110" font-family="Liberation Sans"><text x="921.5" y="553.3" font-size="14.8" fill="#d5dbe3" font-weight="normal" font-style="normal" text-anchor="start" textLength="170.2" lengthAdjust="spacingAndGlyphs" >Physical Product03193966</text><text x="921.5" y="581.5" font-size="14.8" fill="#2333cc" font-weight="normal" font-style="normal" text-anchor="start" textLength="325.4" lengthAdjust="spacingAndGlyphs" >Click this hyperlink to replace computed by decl...</text><text x="921.5" y="607.5" font-size="14.8" fill="#2333cc" font-weight="normal" font-style="normal" text-anchor="start" textLength="324.8" lengthAdjust="spacingAndGlyphs" >This element consists of surfaces without any thi...</text><path d="M1262.5,543.5 L1270.5,539.8 L1278,543 L1278,553.5 L1270.5,557.5 L1262.5,553.8 Z" fill="#e8ecef" stroke="#1e2a33" stroke-width="1"/><path d="M1265.5,544 L1272,541 L1278,543.5 L1278,550 L1271.5,553 L1265.5,550.5 Z" fill="#6fb3dc" stroke="#123a55" stroke-width="0.9"/><path d="M1265.5,544 L1271.5,547 L1278,543.5 M1271.5,547 L1271.5,553" fill="none" stroke="#123a55" stroke-width="0.8"/><path d="M1262.5,553.8 L1270.5,557.5 L1270.5,551" fill="none" stroke="#9aa4ab" stroke-width="0.8"/><rect x="1266.5" y="566" width="5.5" height="4" rx="1" fill="#c8c23a" stroke="#6f6a10" stroke-width="0.6"/><path d="M1263,571 L1275.5,571 C1277,571 1277.5,572.5 1277.5,574 L1277.5,585.5 L1261,585.5 L1261,574 C1261,572.5 1261.5,571 1263,571 Z" fill="#c3c140" stroke="#6f6a10" stroke-width="0.7"/><path d="M1264.5,577 A5,5 0 0 1 1273.5,575.5 M1274,580 A5,5 0 0 1 1265,581.5" fill="none" stroke="#e0302a" stroke-width="2.1"/><path d="M1272,573.5 L1275.5,574 L1274.5,577.5 Z M1266.5,583.5 L1263,583 L1264,579.5 Z" fill="#e0302a"/><path d="M1266.5,596 L1271,596 L1271,599.5 L1273.5,602 L1273.5,613 L1264,613 L1264,602 L1266.5,599.5 Z" fill="#d8d8d8" stroke="#8a8a8a" stroke-width="0.7"/><rect x="1264" y="607" width="9.5" height="6" fill="#8d8d8d"/><path d="M1260.5,611.5 L1278.5,596" stroke="#d41f3c" stroke-width="3.2" stroke-linecap="round"/></svg>
<svg class="a" style="left:0px;top:940px" width="1920" height="140" viewBox="0 940 1920 140" font-family="Liberation Sans"><defs>
<linearGradient id="tb_blue" x1="0" y1="0" x2="1" y2="1"><stop offset="0" stop-color="#8fd0f0"/><stop offset="1" stop-color="#1f6a9c"/></linearGradient>
<linearGradient id="tb_blue2" x1="0" y1="0" x2="0" y2="1"><stop offset="0" stop-color="#6bbce6"/><stop offset="1" stop-color="#2c78ad"/></linearGradient>
<linearGradient id="tb_wht" x1="0" y1="0" x2="1" y2="1"><stop offset="0" stop-color="#ffffff"/><stop offset="1" stop-color="#cfcfcf"/></linearGradient>
<linearGradient id="tb_grey" x1="0" y1="0" x2="1" y2="1"><stop offset="0" stop-color="#f2f2f2"/><stop offset="0.5" stop-color="#8a8a8a"/><stop offset="1" stop-color="#3e3e3e"/></linearGradient>
<linearGradient id="tb_dis" x1="0" y1="0" x2="1" y2="1"><stop offset="0" stop-color="#c9dce6"/><stop offset="1" stop-color="#9fbccc"/></linearGradient>
<radialGradient id="tb_shell" cx="0.35" cy="0.3" r="0.8"><stop offset="0" stop-color="#f4f4f4"/><stop offset="0.5" stop-color="#9a9a9a"/><stop offset="1" stop-color="#3c3c3c"/></radialGradient>
<radialGradient id="tb_shellb" cx="0.35" cy="0.3" r="0.8"><stop offset="0" stop-color="#c9ecfb"/><stop offset="0.5" stop-color="#56aed8"/><stop offset="1" stop-color="#1e5f88"/></radialGradient>
</defs><path d="M710.4,973.2 L710.4,948.2 Q710.4,945.2 713.4,945.2 L784.4,945.2 L784.4,973.2 Z" fill="#f0f0f0"/><text x="718.2" y="964.8" font-size="15.5" fill="#222" font-weight="normal" font-style="normal" text-anchor="start" textLength="58.9" lengthAdjust="spacingAndGlyphs" >Standard</text><rect x="784.4" y="945.2" width="78.89999999999998" height="28" fill="#d7d9db"/><rect x="783.9" y="946" width="1" height="27" fill="#c3c6c9"/><text x="793.2" y="964.8" font-size="15.5" fill="#222" font-weight="normal" font-style="normal" text-anchor="start" textLength="62.5" lengthAdjust="spacingAndGlyphs" >Assembly</text><rect x="863.3" y="945.2" width="157.30000000000007" height="28" fill="#d7d9db"/><rect x="862.8" y="946" width="1" height="27" fill="#c3c6c9"/><text x="871.9" y="964.8" font-size="15.5" fill="#222" font-weight="normal" font-style="normal" text-anchor="start" textLength="140" lengthAdjust="spacingAndGlyphs" >Product Modification</text><rect x="1020.6" y="945.2" width="46.89999999999998" height="28" fill="#d7d9db"/><rect x="1020.1" y="946" width="1" height="27" fill="#c3c6c9"/><text x="1029.4" y="964.8" font-size="15.5" fill="#222" font-weight="normal" font-style="normal" text-anchor="start" textLength="31" lengthAdjust="spacingAndGlyphs" >View</text><rect x="1067.5" y="945.2" width="61.299999999999955" height="28" fill="#d7d9db"/><rect x="1067.0" y="946" width="1" height="27" fill="#c3c6c9"/><text x="1077.2" y="964.8" font-size="15.5" fill="#222" font-weight="normal" font-style="normal" text-anchor="start" textLength="42.6" lengthAdjust="spacingAndGlyphs" >AR-VR</text><rect x="1128.8" y="945.2" width="50.100000000000136" height="28" fill="#eeeeee"/><rect x="1128.3" y="946" width="1" height="27" fill="#c3c6c9"/><text x="1137" y="964.8" font-size="15.5" fill="#222" font-weight="normal" font-style="normal" text-anchor="start" textLength="33.8" lengthAdjust="spacingAndGlyphs" >Tools</text><path d="M1178.9,945.2 L1231.7,945.2 Q1234.7,945.2 1234.7,948.2 L1234.7,973.2 L1178.9,973.2 Z" fill="#d7d9db"/><rect x="1178.4" y="946" width="1" height="27" fill="#c3c6c9"/><text x="1187.6" y="964.8" font-size="15.5" fill="#222" font-weight="normal" font-style="normal" text-anchor="start" textLength="37.4" lengthAdjust="spacingAndGlyphs" >Touch</text><rect x="710.4" y="947" width="1" height="26" fill="#c4c7ca"/><path d="M710.4,945.2 L720.5,945.2 L710.4,955.3 Z" fill="#3a8ed0"/><path d="M1,979 Q1,973 7,973 L1920,973 L1920,1050 L1,1050 Z" fill="#f0f0f0"/><rect x="0" y="973" width="1.2" height="77" fill="#3e6581"/><rect x="24.2" y="973" width="1" height="77" fill="#c6c6c6"/><path d="M9,983.5 L13.5,988 L18,983.5" fill="none" stroke="#555" stroke-width="1.3"/><rect x="50" y="1032" width="1587" height="16" fill="#d3d6d8"/><path d="M40,1035.5 L35.5,1039.5 L40,1043.5 Z" fill="#555"/><path d="M1904.5,1035 L1909,1038.5 L1904.5,1042 Z" fill="#555"/><rect x="261.3" y="981" width="1" height="42" fill="#d2d2d2"/><rect x="262.3" y="981" width="1" height="42" fill="#fafafa"/><rect x="315.8" y="981" width="1" height="42" fill="#d2d2d2"/><rect x="316.8" y="981" width="1" height="42" fill="#fafafa"/><rect x="388.5" y="981" width="1" height="42" fill="#d2d2d2"/><rect x="389.5" y="981" width="1" height="42" fill="#fafafa"/><rect x="839.5" y="981" width="1" height="42" fill="#d2d2d2"/><rect x="840.5" y="981" width="1" height="42" fill="#fafafa"/><rect x="940.7" y="981" width="1" height="42" fill="#d2d2d2"/><rect x="941.7" y="981" width="1" height="42" fill="#fafafa"/><rect x="1131.3" y="981" width="1" height="42" fill="#d2d2d2"/><rect x="1132.3" y="981" width="1" height="42" fill="#fafafa"/><rect x="1561.2" y="981" width="1" height="42" fill="#d2d2d2"/><rect x="1562.2" y="981" width="1" height="42" fill="#fafafa"/><rect x="1870.2" y="981" width="1" height="42" fill="#d2d2d2"/><rect x="1871.2" y="981" width="1" height="42" fill="#fafafa"/><path d="M179.3,1000 L186.8,1000 L183.05,1005.5 Z" fill="#8a8a8a"/><path d="M244.6,1000 L252.1,1000 L248.35,1005.5 Z" fill="#8a8a8a"/><path d="M371.9,1000 L379.4,1000 L375.65,1005.5 Z" fill="#8a8a8a"/><path d="M637.2,1000 L644.7,1000 L640.95,1005.5 Z" fill="#8a8a8a"/><path d="M797.8,1000 L805.3,1000 L801.55,1005.5 Z" fill="#8a8a8a"/><path d="M997,1000 L1004.5,1000 L1000.75,1005.5 Z" fill="#8a8a8a"/><path d="M1519.3,1000 L1526.8,1000 L1523.05,1005.5 Z" fill="#8a8a8a"/><path d="M1711.7,1000 L1719.2,1000 L1715.45,1005.5 Z" fill="#8a8a8a"/><path d="M820.4,995 L830.9,1002.2 L820.4,1009.4 Z" fill="#6d7f8c"/><path d="M1114.2,995 L1124.7,1002.2 L1114.2,1009.4 Z" fill="#6d7f8c"/><path d="M1542.3,995 L1552.8,1002.2 L1542.3,1009.4 Z" fill="#6d7f8c"/><g transform="translate(30,980)"><path d="M17,17 L27,23 L17,28 Z" fill="#a9c6d5"/><path d="M26,21.5 L44.5,13.5 L43.5,16 L28,23 Z M26,23.5 L44.5,31 L43.5,28.5 L28,22 Z" fill="#ececec" stroke="#b9c4c9" stroke-width="1"/><circle cx="14" cy="13" r="6.3" fill="#a9c6d5" stroke="#9cb8c7" stroke-width="0.8"/><circle cx="14" cy="13" r="2.9" fill="#e4e9f0"/><circle cx="14" cy="31.8" r="6.3" fill="#a9c6d5" stroke="#9cb8c7" stroke-width="0.8"/><circle cx="14" cy="31.8" r="2.9" fill="#eef1f5"/></g><g transform="translate(86.3,983.9)"><path d="M1,1 L11,1 L16,6 L16,26 L1,26 Z" fill="url(#tb_wht)" stroke="#222" stroke-width="1.2"/><path d="M13,12 L27,12 L34.5,19 L34.5,35.5 L13,35.5 Z" fill="url(#tb_blue)" stroke="#0b2f4a" stroke-width="1.6"/><path d="M27,12 L27,19 L34.5,19" fill="#a8dcf2" stroke="#0b2f4a" stroke-width="1"/></g><g transform="translate(134.8,985)"><rect x="1" y="4" width="24" height="28" rx="1.5" fill="#f4f4f4" stroke="#c8c8c8" stroke-width="1.2"/><rect x="7" y="1" width="12" height="5" fill="#dcdcdc" stroke="#c0c0c0"/><path d="M13,14 L26,14 L33,21 L33,36 L13,36 Z" fill="url(#tb_dis)" stroke="#b0c4ce" stroke-width="1"/></g><g transform="translate(200.5,987.9)"><path d="M9,14 C17,4 32,7 31,19 C30.5,26 25,30 19,30 L16,27 C22,26 25,23 25,19 C25,12 16,10 12,17 L15,20 L2,20 L3,7 Z" fill="url(#tb_blue2)" stroke="#1c5b86" stroke-width="1.2"/></g><g transform="translate(270.3,988.5)"><rect x="1" y="6" width="36" height="15" fill="#f2f2f2" stroke="#b8b8b8"/><circle cx="19" cy="13" r="9" fill="#f6f6f6" stroke="#111" stroke-width="2.6"/><rect x="16" y="10.5" width="5" height="5" fill="#3a7fb0"/><path d="M25,20 L32,27.5" stroke="#111" stroke-width="3.4" stroke-linecap="round"/></g><g transform="translate(327.7,986.9)"><path d="M5,13 A12,12 0 0 1 14,4" fill="none" stroke="#b3cad6" stroke-width="5"/><path d="M11,0 L19,4 L12,9 Z" fill="#b3cad6"/><path d="M21,4 A12,12 0 0 1 30,13" fill="none" stroke="#b3cad6" stroke-width="5"/><path d="M34,10 L30,18 L25,11 Z" fill="#b3cad6"/><path d="M30,19 A12,12 0 0 1 21,28" fill="none" stroke="#b3cad6" stroke-width="5"/><path d="M24,32 L16,28 L23,23 Z" fill="#b3cad6"/><path d="M14,28 A12,12 0 0 1 5,19" fill="none" stroke="#b3cad6" stroke-width="5"/><path d="M1,22 L5,14 L10,21 Z" fill="#b3cad6"/></g><g transform="translate(401.6,984.5)"><path d="M6,2 L31,2 L37,17 L37,27 L1,27 L1,17 Z" fill="url(#tb_grey)" stroke="#555" stroke-width="1"/><path d="M1,17 L37,17" stroke="#bbb"/><rect x="25.35" y="19.50" width="3.30" height="3.75" fill="#1e1e1e" transform="rotate(0 27 27)"/><rect x="25.35" y="19.50" width="3.30" height="3.75" fill="#1e1e1e" transform="rotate(45 27 27)"/><rect x="25.35" y="19.50" width="3.30" height="3.75" fill="#1e1e1e" transform="rotate(90 27 27)"/><rect x="25.35" y="19.50" width="3.30" height="3.75" fill="#1e1e1e" transform="rotate(135 27 27)"/><rect x="25.35" y="19.50" width="3.30" height="3.75" fill="#1e1e1e" transform="rotate(180 27 27)"/><rect x="25.35" y="19.50" width="3.30" height="3.75" fill="#1e1e1e" transform="rotate(225 27 27)"/><rect x="25.35" y="19.50" width="3.30" height="3.75" fill="#1e1e1e" transform="rotate(270 27 27)"/><rect x="25.35" y="19.50" width="3.30" height="3.75" fill="#1e1e1e" transform="rotate(315 27 27)"/><circle cx="27" cy="27" r="5.40" fill="#1e1e1e"/><circle cx="27" cy="27" r="2.25" fill="#f0f0f0"/></g><g transform="translate(450.7,984.5)"><rect x="1" y="1" width="23" height="23" fill="#fafafa" stroke="#333" stroke-width="1.2"/><rect x="1" y="1" width="23" height="3.5" fill="#2d6ea0"/><g fill="#2f79b0"><rect x="4" y="8" width="4" height="2.4"/><rect x="4" y="13" width="4" height="2.4"/><rect x="4" y="18" width="4" height="2.4"/></g><g fill="#555"><rect x="10" y="8.5" width="11" height="1.4"/><rect x="10" y="13.5" width="11" height="1.4"/><rect x="10" y="18.5" width="11" height="1.4"/></g><path d="M18,19 L18,34 L21.5,30.5 L24.5,36 L27,34.5 L24.2,29.5 L29,29 Z" fill="#fff" stroke="#222" stroke-width="1.1"/></g><g transform="translate(501.2,986.8)"><rect x="1" y="1" width="25.5" height="31" fill="#f4f4f4" stroke="#333" stroke-width="1.3"/><rect x="1" y="1" width="25.5" height="3.5" fill="#2d6ea0"/><g fill="#6a6a6a" stroke="#333" stroke-width="0.6"><rect x="4" y="8" width="5" height="5"/><rect x="11" y="8" width="5" height="5"/><rect x="4" y="17" width="5" height="5"/><rect x="11" y="17" width="5" height="5"/><rect x="18" y="17" width="5" height="5"/><rect x="4" y="25" width="5" height="5"/></g></g><rect x="540.5" y="982" width="42" height="41.5" rx="2" fill="#e6eef6" stroke="#5b9fd6" stroke-width="1.3"/><g transform="translate(545.5,985.5)"><circle cx="12" cy="12" r="10.5" fill="#e44"/><path d="M12,12 L12,1.5 A10.5,10.5 0 0 1 22.5,12 Z" fill="#3aa655"/><path d="M12,12 L1.5,12 A10.5,10.5 0 0 1 12,1.5 Z" fill="#f5c542"/><rect x="11" y="11" width="22" height="21" fill="#f8f8f8" stroke="#333" stroke-width="1.2"/><rect x="11" y="11" width="22" height="3.5" fill="#2d6ea0"/><g fill="#2f79b0"><rect x="14" y="17.5" width="4" height="2.4"/><rect x="14" y="22" width="4" height="2.4"/><rect x="14" y="26.5" width="4" height="2.4"/></g><g fill="#555"><rect x="20" y="18" width="10" height="1.3"/><rect x="20" y="22.5" width="10" height="1.3"/><rect x="20" y="27" width="10" height="1.3"/></g></g><g transform="translate(592.9,986.8)"><path d="M17.2,1 L21.8,12 L33.5,12.3 L24.3,19.7 L27.7,31.5 L17.2,24.8 L6.7,31.5 L10.1,19.7 L0.9,12.3 L12.6,12 Z" fill="url(#tb_blue2)" stroke="#1c5a85" stroke-width="1.2"/></g><g transform="translate(660.4,984.5)"><rect x="2" y="1" width="28" height="34" rx="1" fill="url(#tb_wht)" stroke="#333" stroke-width="1.3"/><g fill="#333"><rect x="8" y="8" width="17" height="1.8"/><rect x="8" y="13" width="17" height="1.8"/><rect x="8" y="18" width="17" height="1.8"/><rect x="8" y="23" width="17" height="1.8"/></g><g fill="#2d7cb5"><rect x="29" y="5" width="3" height="4"/><rect x="29" y="12" width="3" height="4"/><rect x="29" y="19" width="3" height="4"/><rect x="29" y="26" width="3" height="4"/></g><g fill="#333"><rect x="0" y="6" width="3" height="2"/><rect x="0" y="13" width="3" height="2"/><rect x="0" y="20" width="3" height="2"/><rect x="0" y="27" width="3" height="2"/></g></g><g transform="translate(706.6,984.5)"><rect x="1" y="13" width="13" height="10" fill="url(#tb_blue2)" stroke="#1e5d88"/><rect x="20" y="2" width="13" height="9" fill="url(#tb_wht)" stroke="#333"/><rect x="20" y="25" width="13" height="9" fill="url(#tb_grey)" stroke="#333"/><path d="M14,18 L17,18 L20,8 M17,18 L20,29" fill="none" stroke="#222" stroke-width="2"/></g><g transform="translate(751.6,984.5)"><rect x="1" y="1" width="36" height="24" fill="url(#tb_wht)" stroke="#222" stroke-width="2"/><rect x="5" y="5" width="17" height="10" fill="#eee" stroke="#222" stroke-width="1.2"/><rect x="7" y="7" width="6" height="6" fill="#555"/><rect x="14" y="7" width="6" height="6" fill="#555"/><rect x="24.89" y="19.70" width="3.21" height="3.65" fill="#1e1e1e" transform="rotate(0 26.5 27)"/><rect x="24.89" y="19.70" width="3.21" height="3.65" fill="#1e1e1e" transform="rotate(45 26.5 27)"/><rect x="24.89" y="19.70" width="3.21" height="3.65" fill="#1e1e1e" transform="rotate(90 26.5 27)"/><rect x="24.89" y="19.70" width="3.21" height="3.65" fill="#1e1e1e" transform="rotate(135 26.5 27)"/><rect x="24.89" y="19.70" width="3.21" height="3.65" fill="#1e1e1e" transform="rotate(180 26.5 27)"/><rect x="24.89" y="19.70" width="3.21" height="3.65" fill="#1e1e1e" transform="rotate(225 26.5 27)"/><rect x="24.89" y="19.70" width="3.21" height="3.65" fill="#1e1e1e" transform="rotate(270 26.5 27)"/><rect x="24.89" y="19.70" width="3.21" height="3.65" fill="#1e1e1e" transform="rotate(315 26.5 27)"/><circle cx="26.5" cy="27" r="5.26" fill="#1e1e1e"/><circle cx="26.5" cy="27" r="2.19" fill="#f0f0f0"/></g><g transform="translate(850.5,984.4)"><path d="M1,1 L8,1 L8,20 L4.5,16 L1,20 Z" fill="url(#tb_blue2)" stroke="#1c4f75"/><path d="M8,9 L16,9 L16,33 L26,33 M16,9 L26,9" fill="none" stroke="#333" stroke-width="2"/><path d="M26,2 L33,2 L33,16 L29.5,13 L26,16 Z M26,26 L33,26 L33,35 L29.5,32 L26,35 Z" fill="#f4f4f4" stroke="#333" stroke-width="1"/></g><g transform="translate(898.6,985)"><path d="M1,9 L19,5 L19,34.5 L1,34.5 Z" fill="url(#tb_blue2)" stroke="#0f3b5c" stroke-width="1.3"/><path d="M19,5 L24,1 L34.5,1 L34.5,29 L19,34.5" fill="#f2f2f2" stroke="#0f3b5c" stroke-width="1.3"/><path d="M22,4 L22,32 M26,2 L26,31 M30,1.5 L30,30" stroke="#2a6a98" stroke-width="2"/></g><g transform="translate(953.7,987.9)"><path d="M3.5,14 A13,12 0 0 1 27.5,8.5" fill="none" stroke="#1c5a85" stroke-width="6.2"/><path d="M3.5,14 A13,12 0 0 1 27.5,8.5" fill="none" stroke="#5fb0dc" stroke-width="3.8"/><path d="M22,9.5 L32,2.5 L31.5,15.5 Z" fill="#3f94c8" stroke="#1c5a85" stroke-width="1"/><path d="M28.5,17 A13,12 0 0 1 4.5,22.5" fill="none" stroke="#1c5a85" stroke-width="6.2"/><path d="M28.5,17 A13,12 0 0 1 4.5,22.5" fill="none" stroke="#5fb0dc" stroke-width="3.8"/><path d="M10,21.5 L0,28.5 L0.5,15.5 Z" fill="#3f94c8" stroke="#1c5a85" stroke-width="1"/></g><g transform="translate(1015.8,983.9)"><rect x="1" y="1" width="22" height="7" fill="#fff" stroke="#111" stroke-width="2.5"/><path d="M5,8 L5,18 L12,18" fill="none" stroke="#111" stroke-width="2.5"/><rect x="14" y="11" width="23" height="25" fill="#fff" stroke="#111" stroke-width="2.6" stroke-dasharray="2.6 2"/><g fill="#111"><rect x="18" y="16" width="14" height="1.5"/><rect x="18" y="21" width="14" height="1.5"/><rect x="18" y="26" width="14" height="1.5"/></g></g><g transform="translate(1065,984)"><path d="M8,7 L18,1 L30,4 L35,12 L35,27 L24,35 L12,30 Z" fill="url(#tb_wht)" stroke="#555" stroke-width="1"/><rect x="1" y="15" width="18" height="21" fill="#f8f8f8" stroke="#333" stroke-width="1.2"/><g fill="#2f79b0"><rect x="3.5" y="18" width="4" height="3"/><rect x="3.5" y="24" width="4" height="3"/><rect x="3.5" y="30" width="4" height="3"/></g><g fill="#555"><rect x="9" y="19" width="8" height="1.3"/><rect x="9" y="25" width="8" height="1.3"/><rect x="9" y="31" width="8" height="1.3"/></g></g><text x="1142.5" y="1015" font-size="34" fill="#1e1e1e" font-weight="bold" font-style="italic" text-anchor="start" textLength="35" lengthAdjust="spacingAndGlyphs" font-family="Liberation Serif">fx</text><g transform="translate(1190.4,987.9)"><path d="M15,4 L23.5,30" stroke="#17456a" stroke-width="4.6" stroke-linecap="round"/><path d="M15,4 L23.5,30" stroke="#4aa3d6" stroke-width="2.4" stroke-linecap="round"/><path d="M14,3 L17.5,12" stroke="#e8e8e8" stroke-width="2.4"/><g stroke="#222" stroke-width="1.2"><path d="M3,6 L7,6 M5,4 L5,8 M23,2 L27,2 M25,0 L25,4 M8,12 L11,12 M28,11 L32,11"/></g><circle cx="9" cy="9.5" r="1.6" fill="#222"/><circle cx="27.5" cy="8" r="1.6" fill="#222"/></g><g transform="translate(1237.2,986.7)"><rect x="0.7" y="0.7" width="34.6" height="30.6" fill="#f6f6f6" stroke="#555" stroke-width="1.2"/><rect x="0.7" y="0.7" width="34.6" height="4.5" fill="#2d86c2"/><path d="M0.7,13 H36 M0.7,22 H36 M12.0,5 V32 M24.0,5 V32" stroke="#777" stroke-width="1"/></g><g transform="translate(1285,986)"><rect x="0.7" y="0.7" width="26.6" height="24.6" fill="#f6f6f6" stroke="#555" stroke-width="1.2"/><rect x="0.7" y="0.7" width="26.6" height="4.5" fill="#2d86c2"/><path d="M0.7,13 H28 M0.7,22 H28 M9.333333333333334,5 V26 M18.666666666666668,5 V26" stroke="#777" stroke-width="1"/></g><g transform="translate(1300,996)"><path d="M2,6 L10,1 L19,5 L19,16 L10,22 L2,17 Z" fill="url(#tb_blue)" stroke="#0d3550"/><path d="M2,6 L10,10 L19,5 M10,10 L10,22" fill="none" stroke="#0d3550"/></g><g transform="translate(1331.7,986)"><path d="M2,10 L14,1 L30,5 L30,24 L18,33 L2,28 Z M2,10 L18,14 L30,5 M18,14 L18,33" fill="none" stroke="#444" stroke-width="1.2"/><rect x="14" y="19" width="22" height="14" fill="#f8f8f8" stroke="#222"/><path d="M22,15 L22,26 L18,23 M22,26 L26,22" stroke="#2d7cb5" stroke-width="3" fill="none"/><path d="M16,24 H34 M16,28 H34" stroke="#555" stroke-width="1"/></g><g transform="translate(1380,986)"><path d="M17,1 L1,17 L17,33" fill="none" stroke="#2f6c98" stroke-width="2.2"/><path d="M20,1 L35,16" fill="none" stroke="#2f6c98" stroke-width="2.2"/><path d="M4,20 L16,8 M4,20 L4,16 M4,20 L8,20 M16,8 L12,8 M16,8 L16,12" stroke="#111" stroke-width="2"/><rect x="23" y="23" width="9" height="2.5" fill="#111"/><rect x="23" y="28" width="9" height="2.5" fill="#111"/></g><g transform="translate(1435,983.3)"><rect x="1" y="1" width="17" height="37" rx="3" fill="#e0d9d0" stroke="#b9b0a6"/><circle cx="9.5" cy="8" r="5" fill="#f2c2c2" stroke="#d9a4a4"/><circle cx="9.5" cy="19" r="5" fill="#efdcb8" stroke="#d8c39a"/><circle cx="9.5" cy="30" r="5.2" fill="#69d86a" stroke="#47b448"/></g><g transform="translate(1471.7,981.7)"><rect x="1" y="1" width="39" height="40" fill="#e4e4e4" stroke="#333" stroke-width="1.5"/><rect x="7" y="5" width="3" height="31" fill="#2d6ea0"/><rect x="4" y="21" width="9" height="5" fill="#555"/><g fill="#888"><rect x="15" y="7" width="3" height="1.5"/><rect x="15" y="14" width="3" height="1.5"/><rect x="15" y="28" width="3" height="1.5"/></g><ellipse cx="29" cy="9" rx="8" ry="3" fill="#f2f2f2" stroke="#555"/><path d="M21,9 L21,31 C21,35 37,35 37,31 L37,9" fill="#ddd" stroke="#555"/><path d="M21,16 C21,19 37,19 37,16 M21,23 C21,26 37,26 37,23" fill="none" stroke="#555"/></g><g transform="translate(1570,986)"><path d="M12,8 L22,1 L36,5 L36,21 L26,28 L12,24 Z" fill="url(#tb_wht)" stroke="#666"/><path d="M22,13 L36,5 L36,21 L26,28 L22,24 Z" fill="url(#tb_blue)" stroke="#0d3550"/><path d="M12,8 L22,13 L22,24" fill="none" stroke="#666"/><ellipse cx="9" cy="26" rx="8" ry="6" fill="url(#tb_shell)"/></g><g transform="translate(1618.3,986)"><path d="M2,12 C3,5 12,2 20,3 C28,4 34,8 35,16 C36,25 31,33 22,34 C12,35 3,30 2,22 Z" fill="url(#tb_shell)"/><path d="M5,16 C12,10 20,14 24,22 C26,27 30,30 34,26" fill="none" stroke="#f0f0f0" stroke-width="1.4" opacity="0.8"/><path d="M8,26 C14,30 22,30 28,27" fill="none" stroke="#333" stroke-width="1.5" opacity="0.5"/></g><g transform="translate(1666,986)"><path d="M4,33 L22,13" stroke="#1c4f75" stroke-width="5" stroke-linecap="round"/><path d="M4,33 L22,13" stroke="#66b6e3" stroke-width="3" stroke-linecap="round"/><path d="M18,11 L25,18" stroke="#333" stroke-width="4"/><path d="M23,9 L31,2 L36,6 L28,14 Z" fill="url(#tb_grey)" stroke="#333"/></g><g transform="translate(1733.3,984)"><g transform="rotate(35 17 19)"><rect x="8" y="3" width="18" height="16" rx="2.5" fill="url(#tb_wht)" stroke="#333" stroke-width="1.1"/><path d="M8,19 L26,19 L26,31 C26,34 24,35 21,35 L13,35 C10,35 8,34 8,31 Z" fill="url(#tb_shellb)" stroke="#1a4f72" stroke-width="1.1"/></g></g><g transform="translate(1780,986)"><path d="M2,12 C3,5 12,2 20,3 C28,4 34,8 35,16 C36,25 31,33 22,34 C12,35 3,30 2,22 Z" fill="url(#tb_shell)"/><path d="M5,16 C12,10 20,14 24,22 C26,27 30,30 34,26" fill="none" stroke="#f0f0f0" stroke-width="1.4" opacity="0.8"/><path d="M8,26 C14,30 22,30 28,27" fill="none" stroke="#333" stroke-width="1.5" opacity="0.5"/><path d="M21,26 H36 M28.5,18.5 V34" stroke="#16496c" stroke-width="6"/><path d="M21.8,26 H35.2 M28.5,19.3 V33.2" stroke="#4aa6d8" stroke-width="3.4"/></g><g transform="translate(1826.7,986)"><path d="M1,9 C2,3 9,1 16,1.5 C23,2 28,5 28,11 C28,18 22,21 15,21 C7,21 1,16 1,9 Z" fill="url(#tb_shell)"/><path d="M7,19 C8,12 16,9 24,10 C32,11 37,16 37,23 C37,31 30,36 21,35.5 C13,35 7,28 7,19 Z" fill="url(#tb_shellb)"/><path d="M11,22 C17,17 25,20 28,27" fill="none" stroke="#e6f6fd" stroke-width="1.3" opacity="0.8"/></g><g transform="translate(1880,984)"><g transform="translate(0,0)"><path d="M0,0 L12,0 L8.5,3.5 L15,10 L10,15 L3.5,8.5 L0,12 Z" fill="url(#tb_blue2)" stroke="#17466a" stroke-width="1"/></g><g transform="translate(38,0)"><g transform="scale(-1,1)"><path d="M0,0 L12,0 L8.5,3.5 L15,10 L10,15 L3.5,8.5 L0,12 Z" fill="url(#tb_blue2)" stroke="#17466a" stroke-width="1"/></g></g><g transform="translate(0,38)"><g transform="scale(1,-1)"><path d="M0,0 L12,0 L8.5,3.5 L15,10 L10,15 L3.5,8.5 L0,12 Z" fill="url(#tb_blue2)" stroke="#17466a" stroke-width="1"/></g></g><path d="M24,35 L29,27 L36,31 L37,23" stroke="#444" stroke-width="1.2" fill="none"/><circle cx="24" cy="35" r="2" fill="#999" stroke="#444" stroke-width="0.8"/><circle cx="29" cy="27" r="2" fill="#999" stroke="#444" stroke-width="0.8"/><circle cx="36" cy="31" r="2" fill="#999" stroke="#444" stroke-width="0.8"/><circle cx="37" cy="21" r="3.2" fill="#5fb3e0" stroke="#17466a" stroke-width="0.8"/></g><rect x="0" y="1050" width="1920" height="28" fill="#f0f0f0"/><rect x="0" y="1078" width="1920" height="2" fill="#3f3f3f"/><text x="5.5" y="1071" font-size="14.5" fill="#111" font-weight="normal" font-style="normal" text-anchor="start" textLength="122.3" lengthAdjust="spacingAndGlyphs" >1 element selected</text><rect x="1482.5" y="1052.5" width="374" height="24" fill="#fff" stroke="#707070" stroke-width="1"/><rect x="1858" y="1052.5" width="25" height="24" fill="#e6e6e6" stroke="#d0d0d0"/><rect x="1862" y="1058" width="12" height="9" fill="none" stroke="#b5b5b5"/><rect x="1869" y="1065" width="9" height="4" fill="#f8f8f8" stroke="#b5b5b5"/><path d="M1901,1053.5 L1913.5,1075.5 L1888.5,1075.5 Z" fill="#f5a524" stroke="#e08a10" stroke-width="1" stroke-linejoin="round"/><rect x="1899.8" y="1059.5" width="2.6" height="9" fill="#fff"/><rect x="1899.8" y="1070" width="2.6" height="2.6" fill="#fff"/></svg>
</body></html>
